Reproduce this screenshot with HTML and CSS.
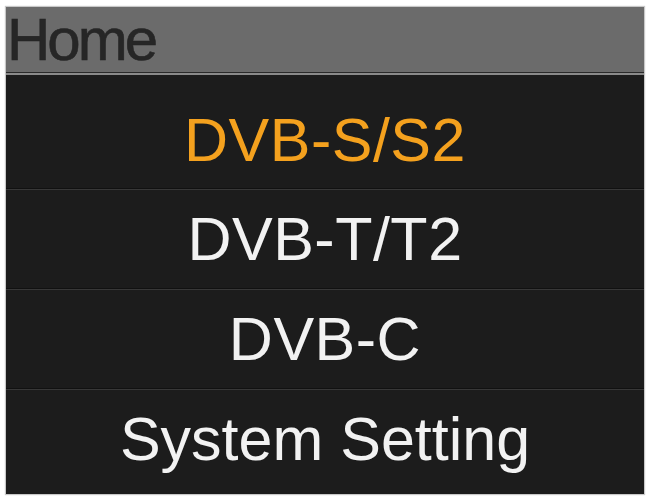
FILE: index.html
```html
<!DOCTYPE html>
<html lang="en">
<head>
  <meta charset="UTF-8">
  <meta name="viewport" content="width=device-width, initial-scale=1.0">
  <link rel="stylesheet" href="styles.css">
  <title>Home</title>
</head>
<body>
  <div class="screen">
    <div class="title-bar">Home</div>
    <ul class="menu">
      <li class="menu-item active">DVB-S/S2</li>
      <li class="menu-item">DVB-T/T2</li>
      <li class="menu-item">DVB-C</li>
      <li class="menu-item">System Setting</li>
    </ul>
  </div>
</body>
</html>
```

FILE: styles.css
```css
body {
  margin: 0;
  background: #ffffff;
  font-family: 'Liberation Sans', Arial, sans-serif;
  padding: 7px 7px 7px 6px;
}

.screen {
  width: 638px;
  height: 487px;
  background-color: #1c1c1c;
  display: flex;
  flex-direction: column;
  box-shadow: 0 0 1px 1px #c8c8c8;
}

.title-bar {
  height: 65px;
  background-color: #6b6b6b;
  color: #262626;
  font-size: 60px;
  letter-spacing: -3px;
  line-height: 65px;
  padding-left: 1px;
  -webkit-text-stroke: 0.6px #262626;
  border-bottom: 1px solid #2a2a2a;
  box-shadow: 0 2px 0 #8a8a8a;
  margin-bottom: 2px;
}

.menu {
  list-style: none;
  margin: 0;
  padding: 0;
  flex: 1;
  display: flex;
  flex-direction: column;
}

.menu-item {
  height: 100px;
  box-sizing: border-box;
  display: flex;
  align-items: center;
  justify-content: center;
  color: #f2f2f2;
  font-size: 61px;
  letter-spacing: 0.5px;
  border-top: 1px solid #111111;
  box-shadow: inset 0 1px 0 #383838;
}

.menu-item:first-child {
  height: 113px;
  padding-top: 16px;
  border-top: none;
  box-shadow: none;
}

.menu-item:last-child {
  height: auto;
  flex: 1;
  padding-bottom: 6px;
  letter-spacing: 0;
}

.menu-item.active {
  color: #f4a11e;
}
```
